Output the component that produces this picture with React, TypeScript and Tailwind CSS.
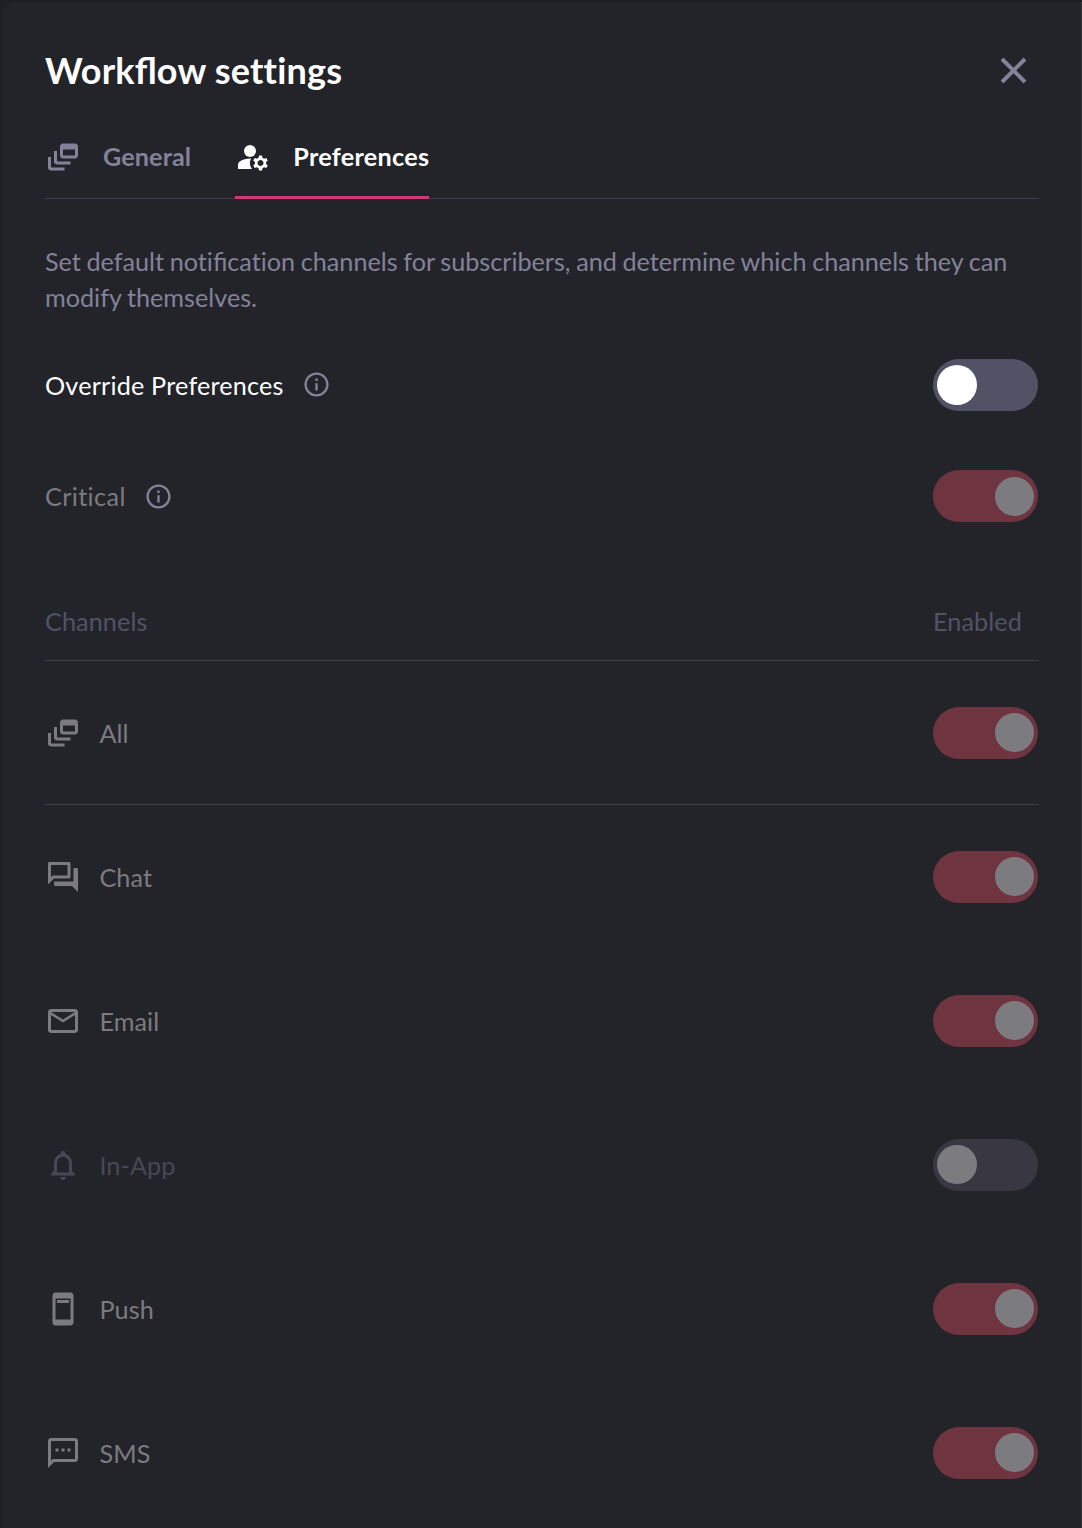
import React from 'react';
import {
  MdOutlineDynamicFeed,
  MdManageAccounts,
  MdInfoOutline,
  MdOutlineForum,
  MdMailOutline,
  MdNotificationsNone,
  MdOutlineSms,
} from 'react-icons/md';

type IconProps = { className?: string };

function PhoneIcon({ className }: IconProps) {
  return (
    <svg className={className} viewBox="0 0 24 24" fill="currentColor">
      <path d="M17 1H7c-1.1 0-2 .9-2 2v18c0 1.1.9 2 2 2h10c1.1 0 2-.9 2-2V3c0-1.1-.9-2-2-2zm0 18H7V5h10v14zM8 6h8v2H8z" />
    </svg>
  );
}

function Toggle({ on = false, disabled = false, low = false }: { on?: boolean; disabled?: boolean; low?: boolean }) {
  const track = on ? 'bg-[#6e343f] justify-end' : disabled ? 'bg-[#393842] justify-start' : 'bg-[#525266] justify-start';
  const knob = on ? 'h-[39px] w-[39px] bg-[#7c7b80]' : disabled ? 'h-[39px] w-10 bg-[#7c7b80]' : 'size-10 bg-white';
  return (
    <button role="switch" aria-checked={on} disabled={disabled} className={`flex h-[52px] w-[105px] shrink-0 items-start rounded-full px-1 ${low ? 'pt-[7px]' : 'pt-1.5'} ${track}`}>
      <span className={`rounded-full ${knob}`} />
    </button>
  );
}

type Channel = { name: string; icon: React.ComponentType<IconProps>; on: boolean };

const channels: Channel[] = [
  { name: 'Chat', icon: MdOutlineForum, on: true },
  { name: 'Email', icon: MdMailOutline, on: true },
  { name: 'In-App', icon: MdNotificationsNone, on: false },
  { name: 'Push', icon: PhoneIcon, on: true },
  { name: 'SMS', icon: MdOutlineSms, on: true },
];

function ChannelRow({ name, icon: Icon, on }: Channel) {
  return (
    <div className={`flex h-36 shrink-0 items-center justify-between pr-px ${on ? 'text-[#7c7b80]' : 'text-[#484854]'}`}>
      <div className="flex items-center gap-[18.4px]">
        <Icon className="size-9" />
        <span>{name}</span>
      </div>
      <Toggle on={on} disabled />
    </div>
  );
}

export default function App() {
  return (
    <div className="h-[1528px] w-[1082px] overflow-hidden bg-[#1e1e24] pl-0.5 pt-0.5 font-['Lato',sans-serif] text-[25.2px] leading-9 tracking-[0.1px] [font-variant-ligatures:none]">
      <div className="h-full rounded-tl-xl border-r border-[#343438] bg-[#23242a] pl-[43px] pr-[42px] pt-11">
        <header className="flex h-12 items-center justify-between">
          <h1 className="text-4xl font-bold tracking-[0.2px] text-white">
            Work<span className="tracking-[0px] [font-variant-ligatures:normal]">fl</span>ow settings
          </h1>
          <button aria-label="Close" className="mr-3 text-[#828299]">
            <svg width="27" height="27" viewBox="0 0 27 27" fill="none" stroke="currentColor" strokeWidth="4">
              <path d="M2 2 25 25M25 2 2 25" />
            </svg>
          </button>
        </header>

        <nav className="mt-[30px] flex h-[75px] gap-11 border-b border-[#3d3d4d] font-bold">
          <button className="flex h-[75px] items-start gap-[22px] pt-[15px] text-[#828299]">
            <MdOutlineDynamicFeed className="size-9" />
            <span className="relative -top-px">General</span>
          </button>
          <button className="flex h-[75px] items-start gap-[22px] border-b-3 border-[#cf3a75] pt-[15px] tracking-[0.3px] text-white">
            <MdManageAccounts className="size-9" />
            <span className="relative -top-px">Preferences</span>
          </button>
        </nav>

        <p className="mt-11 tracking-[0px] text-[#828299] [word-spacing:-0.8px]">
          Set default noti<span className="[font-variant-ligatures:normal]">fi</span>cation channels for subscribers, and determine which channels they can modify themselves.
        </p>

        <div className="mt-11 flex h-[52px] items-center justify-between pr-px">
          <div className="flex items-center gap-[18px]">
            <span className="tracking-[0.2px] text-white">Override Preferences</span>
            <MdInfoOutline className="relative -top-px size-[29px] text-[#828299]" />
          </div>
          <Toggle />
        </div>
        <div className="mt-[59px] flex h-[52px] items-center justify-between pr-px">
          <div className="flex items-center gap-[18px]">
            <span className="tracking-[0.4px] text-[#7c7b80]">Critical</span>
            <MdInfoOutline className="size-[29px] text-[#828299]" />
          </div>
          <Toggle on disabled low />
        </div>

        <div className="mt-[81px] flex h-[58px] justify-between border-b border-[#3d3d4d] text-[#525266]">
          <span>Channels</span>
          <span className="w-[106px]">Enabled</span>
        </div>
        <div className="h-36 border-b border-[#3d3d4d]">
          <ChannelRow name="All" icon={MdOutlineDynamicFeed} on />
        </div>
        {channels.map((channel) => (
          <ChannelRow key={channel.name} {...channel} />
        ))}
      </div>
    </div>
  );
}
